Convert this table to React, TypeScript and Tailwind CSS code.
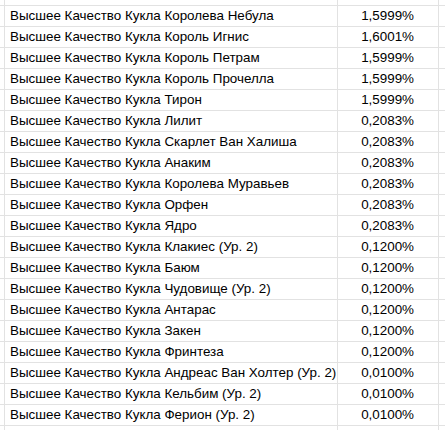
import React from "react";

const rows: [string, string][] = [
  ["Высшее Качество Кукла Королева Небула", "1,5999%"],
  ["Высшее Качество Кукла Король Игнис", "1,6001%"],
  ["Высшее Качество Кукла Король Петрам", "1,5999%"],
  ["Высшее Качество Кукла Король Прочелла", "1,5999%"],
  ["Высшее Качество Кукла Тирон", "1,5999%"],
  ["Высшее Качество Кукла Лилит", "0,2083%"],
  ["Высшее Качество Кукла Скарлет Ван Халиша", "0,2083%"],
  ["Высшее Качество Кукла Анаким", "0,2083%"],
  ["Высшее Качество Кукла Королева Муравьев", "0,2083%"],
  ["Высшее Качество Кукла Орфен", "0,2083%"],
  ["Высшее Качество Кукла Ядро", "0,2083%"],
  ["Высшее Качество Кукла Клакиес (Ур. 2)", "0,1200%"],
  ["Высшее Качество Кукла Баюм", "0,1200%"],
  ["Высшее Качество Кукла Чудовище (Ур. 2)", "0,1200%"],
  ["Высшее Качество Кукла Антарас", "0,1200%"],
  ["Высшее Качество Кукла Закен", "0,1200%"],
  ["Высшее Качество Кукла Фринтеза", "0,1200%"],
  ["Высшее Качество Кукла Андреас Ван Холтер (Ур. 2)", "0,0100%"],
  ["Высшее Качество Кукла Кельбим (Ур. 2)", "0,0100%"],
  ["Высшее Качество Кукла Ферион (Ур. 2)", "0,0100%"],
];

function Row({ name, value, h }: { name: string; value: string; h: string }) {
  return (
    <div className={`flex ${h} border-b border-[#e2e2e2]`}>
      <div className="w-[5px] shrink-0 border-r border-[#e2e2e2]" />
      <div className="w-[333px] shrink-0 border-r border-[#e2e2e2] flex items-end pl-[5px] pb-[3px] whitespace-nowrap overflow-hidden">
        {name}
      </div>
      <div className="w-[101px] shrink-0 border-r border-[#e2e2e2] flex items-end justify-end pr-[24px] pb-[3px]">
        {value}
      </div>
      <div className="flex-1" />
    </div>
  );
}

export default function App() {
  return (
    <div className="w-[445px] h-[430px] overflow-hidden bg-white text-black text-[13.4px] leading-[15px] font-['Liberation_Sans',Arial,sans-serif]">
      <Row name="" value="" h="h-[6px]" />
      {rows.map(([n, v]) => (
        <Row key={n} name={n} value={v} h="h-[21px]" />
      ))}
      <Row name="" value="" h="h-[21px]" />
    </div>
  );
}
